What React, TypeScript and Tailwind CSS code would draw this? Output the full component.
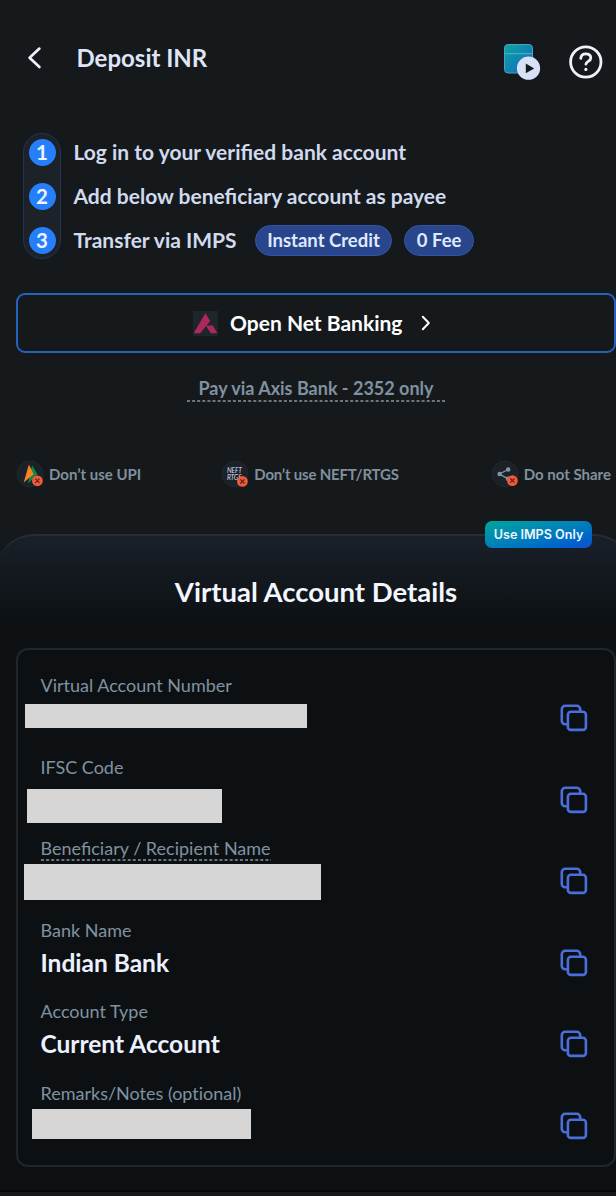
import type { ReactNode } from 'react'

interface AccountField {
  label: string
  value?: string
  hidden?: string
  dotted?: boolean
}

const steps = [
  { text: 'Log in to your verified bank account', tags: [] },
  { text: 'Add below beneficiary account as payee', tags: [] },
  { text: 'Transfer via IMPS', tags: ['Instant Credit', '0 Fee'] },
]

const fields: AccountField[] = [
  { label: 'Virtual Account Number', hidden: '-ml-4 mt-1.5 h-6 w-[282px]' },
  { label: 'IFSC Code', hidden: '-ml-3.5 mt-[9.5px] h-[34px] w-[195px]' },
  { label: 'Beneficiary / Recipient Name', hidden: '-ml-[17px] mt-[3px] h-9 w-[297px]', dotted: true },
  { label: 'Bank Name', value: 'Indian Bank' },
  { label: 'Account Type', value: 'Current Account' },
  { label: 'Remarks/Notes (optional)', hidden: '-ml-[9px] mt-[3.5px] h-[30px] w-[219px]' },
]

function DottedLine() {
  return (
    <svg className="w-0 min-w-full shrink-0" height="2">
      <line x1="0" y1="1" x2="100%" y2="1" stroke="#8496a3" strokeWidth="1.5" strokeDasharray="3 2.1" />
    </svg>
  )
}

function CopyIcon() {
  return (
    <svg width="28" height="28" viewBox="0 0 28 28" fill="none" stroke="#4a6fdc" strokeWidth="2.6">
      <path d="M6.9 20.3H5.2a3.4 3.4 0 0 1-3.4-3.4V5.2a3.4 3.4 0 0 1 3.4-3.4h11.6a3.4 3.4 0 0 1 3.4 3.4v1.7" />
      <rect x="7.9" y="7.7" width="18" height="18.2" rx="3" />
    </svg>
  )
}

function VideoGuideIcon() {
  return (
    <svg width="38" height="38" viewBox="0 0 38 38">
      <defs>
        <linearGradient id="guide" x1="0" y1="0" x2="1" y2="1">
          <stop offset="0" stopColor="#0ca79f" />
          <stop offset="1" stopColor="#1464c4" />
        </linearGradient>
      </defs>
      <rect x="1.5" y="1.5" width="28" height="28.5" rx="3.5" fill="url(#guide)" stroke="#4b9fc0" />
      <path d="M1.5 10.7h28" stroke="#4fb5c9" />
      <circle cx="25.5" cy="25.2" r="11.6" fill="#d8e1f8" />
      <path d="M22.8 20.6v9.6l8.4-4.8z" fill="#15191d" />
    </svg>
  )
}

function HelpIcon() {
  return (
    <svg width="34" height="34" viewBox="0 0 34 34" fill="none" stroke="#eef1fc" strokeWidth="2.8" strokeLinecap="round">
      <circle cx="16.8" cy="17" r="15.2" />
      <path d="M11.8 13.4c.2-2.9 2.2-4.6 5-4.6 3 0 5 1.7 5 4.1 0 3.6-4.9 3.3-4.9 6.3" />
      <circle cx="16.9" cy="24.4" r="1.6" fill="#eef1fc" stroke="none" />
    </svg>
  )
}

function CrossDot({ cx, cy }: { cx: number; cy: number }) {
  return (
    <g>
      <circle cx={cx} cy={cy} r="5.4" fill="#ee5a3a" />
      <path
        d={`M${cx - 2.1} ${cy - 2.1}l4.2 4.2M${cx + 2.1} ${cy - 2.1}l-4.2 4.2`}
        stroke="#5a1f18"
        strokeWidth="1.1"
      />
    </g>
  )
}

function Warning({ icon, text, className = '' }: { icon: ReactNode; text: string; className?: string }) {
  return (
    <div
      className={`flex items-center gap-[5px] text-[15px] leading-6 font-bold text-[#80909d] whitespace-nowrap ${className}`}
    >
      <svg width="28" height="28" viewBox="0 0 28 28">
        <circle cx="14" cy="14" r="13" fill="#1b2128" stroke="#20272e" />
        {icon}
      </svg>
      {text}
    </div>
  )
}

export default function App() {
  return (
    <div className="flex h-[1196px] w-[616px] flex-col overflow-hidden bg-[#15191c] font-['Lato',sans-serif]">
      {/* Header */}
      <header className="flex h-[110px] shrink-0 items-start pt-[41px]">
        <svg className="ml-[27px] mt-[5px]" width="16" height="24" viewBox="0 0 16 24" fill="none">
          <path d="M12.4 2.6L2.6 11.8l9.8 9.2" stroke="#eef1fc" strokeWidth="2.7" strokeLinecap="round" strokeLinejoin="round" />
        </svg>
        <h1 className="ml-[33.5px] mt-px text-[24px] leading-8 font-bold text-[#dfe5f6]">Deposit INR</h1>
        <div className="ml-auto flex pr-[13.5px] pt-0.5">
          <VideoGuideIcon />
          <div className="ml-7 mt-0.5">
            <HelpIcon />
          </div>
        </div>
      </header>

      {/* Steps */}
      <section className="ml-[23px] mt-[23px] flex h-[126px] shrink-0">
        <div className="flex w-[38px] flex-col items-center gap-[17px] rounded-full border-[1.5px] border-[#213358] bg-[#1c2227] pt-[5px]">
          {steps.map((step, i) => (
            <span
              key={step.text}
              className="flex size-[27px] items-center justify-center rounded-full bg-[#267ffa] pb-px text-[20.5px] leading-none font-bold text-[#eef3ff]"
            >
              {i + 1}
            </span>
          ))}
        </div>
        <div className="-mt-[3px] ml-[12.5px] flex flex-col">
          {steps.map((step) => (
            <div
              key={step.text}
              className="flex h-11 shrink-0 items-center gap-3 text-[21px] leading-none font-bold whitespace-nowrap text-[#d2daee]"
            >
              <span className="mr-1.5 pb-0.5">{step.text}</span>
              {step.tags.map((tag) => (
                <span
                  key={tag}
                  className="flex h-[31px] items-center rounded-full border-[1.5px] border-[#3355a8] bg-[#29468c] px-[11.5px] pt-px text-[18.5px] text-[#dfe9ff]"
                >
                  {tag}
                </span>
              ))}
            </div>
          ))}
        </div>
      </section>

      {/* Net banking */}
      <button className="ml-4 mt-[34px] flex h-[60px] shrink-0 items-center rounded-[9px] border-2 border-[#2462c0] pl-[175px] text-[21px] font-bold text-white">
        <svg width="25" height="25" viewBox="0 0 25 25">
          <rect width="25" height="25" fill="#1e252b" />
          <path d="M12.4 2.2L17.2 10 7.2 22.3H.7z" fill="#ae285d" />
          <path d="M12.8 14.5h7.1l4.5 7.8h-6.6z" fill="#ae285d" />
        </svg>
        <span className="ml-3">Open Net Banking</span>
        <svg className="ml-[19px]" width="10" height="16" viewBox="0 0 10 16" fill="none">
          <path d="M1.8 1.8l6 6.2-6 6.2" stroke="#fff" strokeWidth="2" strokeLinecap="round" strokeLinejoin="round" />
        </svg>
      </button>
      <div className="ml-[187px] mt-[23px] flex w-[258px] shrink-0 flex-col text-center text-[18px] leading-6 font-bold text-[#8091a0]">
        Pay via Axis Bank - 2352 only
        <DottedLine />
      </div>

      {/* Restrictions */}
      <div className="mt-[58px] flex h-7 shrink-0 items-center justify-between pl-4 pr-[5px]">
        <Warning
          text="Don’t use UPI"
          icon={
            <>
              <path d="M16.1 5.2l5.6 9.4-9.7 9z" fill="#128545" />
              <path d="M12.9 4.4l4.8 9.8L7.7 22.6z" fill="#f68420" />
              <CrossDot cx={21.4} cy={20.8} />
            </>
          }
        />
        <Warning
          text="Don’t use NEFT/RTGS"
          className="mr-3 tracking-[-0.2px]"
          icon={
            <>
              <text x="6" y="12.8" fontSize="6.7" fontWeight="400" fontStyle="italic" fill="#d7dff2">NEFT</text>
              <text x="6" y="20.4" fontSize="6.7" fontWeight="400" fontStyle="italic" fill="#d7dff2">RTGS</text>
              <CrossDot cx={21.4} cy={21.4} />
            </>
          }
        />
        <Warning
          text="Do not Share"
          icon={
            <>
              <path d="M17.2 9.5L8.4 14l8.8 4.8" fill="none" stroke="#8494a1" strokeWidth="1.4" />
              <circle cx="17.2" cy="9.5" r="2.2" fill="#8494a1" />
              <circle cx="8.6" cy="14" r="2.2" fill="#8494a1" />
              <circle cx="17" cy="18.8" r="2.2" fill="#8494a1" />
              <CrossDot cx={21.4} cy={20.6} />
            </>
          }
        />
      </div>

      {/* Account details, the sheet is wider than the screen */}
      <section className="relative -ml-1 mt-[46px] flex h-[656px] w-[636px] shrink-0 flex-col rounded-t-[38px] border-t-2 border-[#262e35] bg-linear-to-b from-[#1a2029] to-[#0c1013] to-[90px] pl-5 pr-4">
        <span className="absolute right-10 top-[-15.5px] flex h-[27px] w-[107px] items-center justify-center rounded-[7px] bg-linear-to-br from-[#0ba69a] to-[#154cd4] pt-0.5 font-['Inter',sans-serif] text-[12.6px] font-semibold text-[#f1f6ff]">
          Use IMPS Only
        </span>
        <h2 className="mt-[38px] text-center text-[27.5px] leading-9 font-bold text-[#f3f6ff]">Virtual Account Details</h2>
        <div className="mt-[38px] h-[519px] rounded-[12px] border-2 border-[#20272c] pl-[22.5px] pr-[26px] pt-6">
          {fields.map((field) => (
            <div key={field.label} className="flex h-[81.5px] items-start justify-between">
              <div className="flex flex-col items-start">
                <div
                  className={`flex h-6 flex-col text-[18px] leading-[22px] text-[#8092a0] ${
                    field.dotted ? '' : '[font-variant-ligatures:none]'
                  }`}
                >
                  {field.label}
                  {field.dotted && <DottedLine />}
                </div>
                {field.value && (
                  <p className="mt-1 text-[24.5px] leading-8 font-bold text-[#edf1ff]">{field.value}</p>
                )}
                {field.hidden && <div className={`shrink-0 bg-[#d6d6d6] ${field.hidden}`} />}
              </div>
              <button className="mt-[30px]">
                <CopyIcon />
              </button>
            </div>
          ))}
        </div>
      </section>
      <footer className="flex-1 border-t-2 border-[#050607] bg-[#15181b]" />
    </div>
  )
}
